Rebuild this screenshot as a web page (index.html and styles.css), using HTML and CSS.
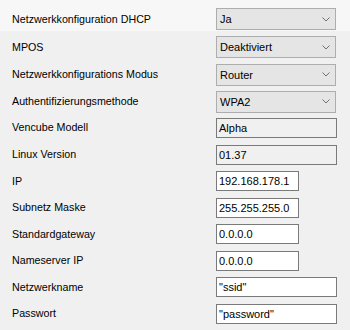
FILE: index.html
```html
<!DOCTYPE html>
<html lang="de">
<head>
<meta charset="utf-8">
<link rel="stylesheet" href="styles.css">
</head>
<body>
<div class="form">
  <div class="row band">
    <span class="label">Netzwerkkonfiguration DHCP</span>
    <div class="combo"><span>Ja</span><svg class="chev" width="8" height="5" viewBox="0 0 8 5"><path d="M0.5 0.5 L4 4 L7.5 0.5" fill="none" stroke="#707070" stroke-width="1"/></svg></div>
  </div>
  <div class="row crow">
    <span class="label">MPOS</span>
    <div class="combo"><span>Deaktiviert</span><svg class="chev" width="8" height="5" viewBox="0 0 8 5"><path d="M0.5 0.5 L4 4 L7.5 0.5" fill="none" stroke="#707070" stroke-width="1"/></svg></div>
  </div>
  <div class="row crow">
    <span class="label">Netzwerkkonfigurations Modus</span>
    <div class="combo"><span>Router</span><svg class="chev" width="8" height="5" viewBox="0 0 8 5"><path d="M0.5 0.5 L4 4 L7.5 0.5" fill="none" stroke="#707070" stroke-width="1"/></svg></div>
  </div>
  <div class="row crow">
    <span class="label">Authentifizierungsmethode</span>
    <div class="combo"><span>WPA2</span><svg class="chev" width="8" height="5" viewBox="0 0 8 5"><path d="M0.5 0.5 L4 4 L7.5 0.5" fill="none" stroke="#707070" stroke-width="1"/></svg></div>
  </div>
  <div class="row trow first">
    <span class="label">Vencube Modell</span>
    <div class="tbox wide ro">Alpha</div>
  </div>
  <div class="row trow">
    <span class="label">Linux Version</span>
    <div class="tbox wide ro">01.37</div>
  </div>
  <div class="row trow">
    <span class="label">IP</span>
    <div class="tbox short">192.168.178.1</div>
  </div>
  <div class="row trow">
    <span class="label">Subnetz Maske</span>
    <div class="tbox short">255.255.255.0</div>
  </div>
  <div class="row trow">
    <span class="label">Standardgateway</span>
    <div class="tbox short">0.0.0.0</div>
  </div>
  <div class="row trow">
    <span class="label">Nameserver IP</span>
    <div class="tbox short">0.0.0.0</div>
  </div>
  <div class="row trow">
    <span class="label">Netzwerkname</span>
    <div class="tbox wide">"ssid"</div>
  </div>
  <div class="row trow">
    <span class="label">Passwort</span>
    <div class="tbox wide">"password"</div>
  </div>
</div>
</body>
</html>
```
FILE: styles.css
```css
html, body {
  margin: 0;
  padding: 0;
  background: #f0f0f0;
}
body {
  width: 350px;
  height: 330px;
  overflow: hidden;
  font-family: "Liberation Sans", Arial, sans-serif;
  font-size: 11px;
  color: #000;
}
.form {
  display: flex;
  flex-direction: column;
}
.row {
  display: flex;
  align-items: center;
}
.label {
  width: 204px;
  padding-left: 12px;
  white-space: nowrap;
  font-size: 10.7px;
  margin-top: -1px;
}
.band {
  background: #f7f7f7;
  padding: 8px 0 1px;
}
.crow {
  margin-top: 5.33px;
}
.trow {
  margin-top: 6.57px;
}
.trow.first {
  margin-top: 5px;
}
.combo {
  box-sizing: border-box;
  width: 120px;
  height: 22px;
  border: 1px solid #adadad;
  background: #e5e5e5;
  display: flex;
  align-items: center;
  justify-content: space-between;
  padding: 0 5px 0 3px;
}
.chev {
  display: block;
}
.tbox {
  box-sizing: border-box;
  height: 20px;
  border: 1px solid #7a7a7a;
  background: #fff;
  display: flex;
  align-items: center;
  padding-left: 2px;
}
.tbox.wide {
  width: 121px;
}
.tbox.short {
  width: 83px;
}
.tbox.ro {
  background: #f0f0f0;
}
```
